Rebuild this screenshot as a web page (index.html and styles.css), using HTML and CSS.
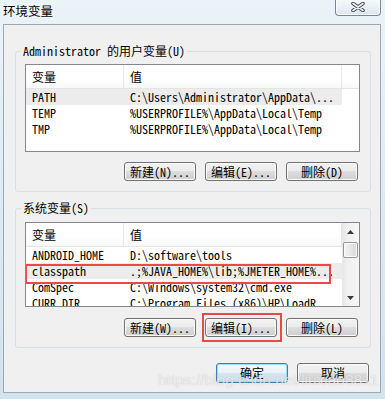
FILE: index.html
```html
<!DOCTYPE html>
<html lang="zh-CN">
<head>
  <meta charset="UTF-8">
  <title>环境变量</title>
  <link rel="stylesheet" href="styles.css">
</head>
<body>

  <!-- title bar -->
  <div class="titlebar">
    <span class="title">环境变量</span>
    <div class="close">
      <svg width="14" height="10" viewBox="0 0 14 10">
        <path d="M2 1.5 L12 8.5 M12 1.5 L2 8.5" stroke="#4a4f55" stroke-width="3.6" stroke-linecap="round"/>
        <path d="M2 1.5 L12 8.5 M12 1.5 L2 8.5" stroke="#eef0f2" stroke-width="1.6" stroke-linecap="round"/>
      </svg>
    </div>
  </div>

  <div class="dialog">

    <!-- user variables -->
    <fieldset class="group">
      <legend>Administrator 的用户变量(U)</legend>
      <div class="list">
        <div class="list-main">
          <div class="head">
            <span class="hcell">变量</span>
            <span class="hcell">值</span>
            <span class="hcell last"></span>
          </div>
          <div class="row sel"><span>PATH</span><span>C:\Users\Administrator\AppData\...</span></div>
          <div class="row"><span>TEMP</span><span>%USERPROFILE%\AppData\Local\Temp</span></div>
          <div class="row"><span>TMP</span><span>%USERPROFILE%\AppData\Local\Temp</span></div>
        </div>
      </div>
      <div class="buttons">
        <button>新建(N)...</button>
        <button>编辑(E)...</button>
        <button>删除(D)</button>
      </div>
    </fieldset>

    <!-- system variables -->
    <fieldset class="group second">
      <legend>系统变量(S)</legend>
      <div class="list short">
        <div class="list-main">
          <div class="head">
            <span class="hcell">变量</span>
            <span class="hcell">值</span>
          </div>
          <div class="row"><span>ANDROID_HOME</span><span>D:\software\tools</span></div>
          <div class="row sel marked"><span>classpath</span><span>.;%JAVA_HOME%\lib;%JMETER_HOME%...</span></div>
          <div class="row"><span>ComSpec</span><span>C:\Windows\system32\cmd.exe</span></div>
          <div class="row"><span>CURR_DIR</span><span>C:\Program Files (x86)\HP\LoadR</span></div>
        </div>
        <div class="scrollbar">
          <div class="sb-btn">
            <svg width="7" height="4" viewBox="0 0 7 4"><path d="M0 4 L3.5 0 L7 4 Z" fill="#3a3a3a"/></svg>
          </div>
          <div class="sb-thumb"></div>
          <div class="sb-track"></div>
          <div class="sb-btn">
            <svg width="7" height="4" viewBox="0 0 7 4"><path d="M0 0 L7 0 L3.5 4 Z" fill="#3a3a3a"/></svg>
          </div>
        </div>
      </div>
      <div class="buttons">
        <button>新建(W)...</button>
        <button class="marked-btn">编辑(I)...</button>
        <button>删除(L)</button>
      </div>
    </fieldset>

    <div class="footer">
      <button class="default">确定</button>
      <button>取消</button>
    </div>
  </div>

  <div class="watermark">https://blog.csdn.net/liuxiao8811</div>

</body>
</html>
```

FILE: styles.css
```css
* {
  box-sizing: border-box;
}
body {
  margin: 0;
  width: 385px;
  height: 399px;
  overflow: hidden;
  position: relative;
  background: linear-gradient(180deg, #eaf3f8 0%, #dde9f2 55%, #d2e3ee 100%);
  font-family: "Noto Sans Mono CJK SC", "Noto Sans CJK SC", monospace;
  font-size: 12px;
  color: #000;
}

/* title bar */
.titlebar {
  height: 24px;
  display: flex;
  align-items: flex-start;
}
.title {
  font-family: "Noto Sans CJK SC", sans-serif;
  font-size: 12.5px;
  line-height: 14px;
  padding: 4px 0 0 3px;
  text-shadow: 0 0 6px #fff;
}
.close {
  margin-left: auto;
  margin-right: 4px;
  margin-top: -1px;
  width: 46px;
  height: 17px;
  border: 1px solid #76879a;
  border-top: none;
  border-radius: 0 0 4px 4px;
  background: linear-gradient(#f7fafc, #dde6ee);
  box-shadow: inset 0 0 0 1px rgba(255, 255, 255, 0.8);
  display: flex;
  align-items: center;
  justify-content: center;
}

/* dialog body */
.dialog {
  margin-left: 3px;
  width: 378px;
  height: 369px;
  border: 1px solid #9ca8b3;
  background: #f0f0f0;
  padding: 19px 9px 0 11px;
}
.group {
  margin: 0;
  min-width: 0;
  padding: 6px 10px 10px 9px;
  border: 1px solid #d5dfe5;
  border-radius: 3px;
}
.group legend {
  padding: 0 2px;
  margin-left: -4px;
  line-height: 14px;
}
.group.second {
  margin-top: 9px;
  padding-top: 7px;
}

/* list view */
.list {
  display: flex;
  height: 88px;
  border: 1px solid #828790;
  background: #fff;
}
.list.short {
  height: 85px;
}
.list-main {
  flex: 1;
  overflow: hidden;
  position: relative;
}
.head {
  display: grid;
  grid-template-columns: 98px 218px 1fr;
  height: 24px;
  border-bottom: 1px solid #e5e5e5;
  background: linear-gradient(#fff, #fff 55%, #f7f8f9);
}
.hcell {
  font-family: "Noto Sans CJK SC", sans-serif;
  line-height: 23px;
  padding-left: 6px;
  border-right: 1px solid #e3e8ee;
}
.hcell.last {
  border-right: none;
}
.row {
  display: grid;
  grid-template-columns: 98px 218px;
  width: 316px;
  height: 16px;
  line-height: 16px;
  white-space: nowrap;
}
.row span {
  overflow: hidden;
  padding-left: 6px;
}
.row.sel {
  background: #ececec;
}
.row.marked {
  position: relative;
}
.row.marked::after {
  content: '';
  position: absolute;
  left: -1px;
  top: 1px;
  width: 302px;
  height: 16px;
  border: 2px solid #e84a4a;
}

/* scrollbar */
.scrollbar {
  width: 17px;
  display: flex;
  flex-direction: column;
  background: linear-gradient(90deg, #e6e6e6, #f1f1f1 35%, #f6f6f6);
}
.sb-btn {
  height: 17px;
  display: flex;
  align-items: center;
  justify-content: center;
}
.sb-thumb {
  margin: 2px 1px 0;
  height: 16px;
  border: 1px solid #979797;
  border-radius: 2px;
  background: linear-gradient(90deg, #f4f4f4, #e6e6e6 50%, #d7d7d7);
  box-shadow: inset 0 0 0 1px #fbfbfb;
}
.sb-track {
  flex: 1;
}

/* buttons */
.buttons {
  display: flex;
  justify-content: flex-end;
  gap: 9px;
  margin-top: 10px;
  padding-right: 2px;
}
.group.second .buttons {
  margin-top: 11px;
}
button {
  width: 72px;
  height: 19px;
  padding: 0;
  border: 1px solid #707070;
  border-radius: 3px;
  background: linear-gradient(#f2f2f2, #ebebeb 50%, #dddddd 50%, #cfcfcf);
  box-shadow: inset 0 0 0 1px #fcfcfc;
  font: inherit;
  line-height: 17px;
  color: #000;
}
.marked-btn {
  position: relative;
}
.marked-btn::after {
  content: '';
  position: absolute;
  inset: -6px -6px -6px -4px;
  border: 2px solid #e84a4a;
}
.footer {
  display: flex;
  justify-content: flex-end;
  gap: 9px;
  margin-top: 15px;
  padding-right: 2px;
}
.footer button {
  height: 20px;
  line-height: 18px;
}
button.default {
  border-color: #3c7fb1;
  box-shadow: inset 0 0 0 1px #9fdcf8;
  background: linear-gradient(#f3f8fb, #eaf2f7 50%, #d9e6ef 50%, #cddde8);
}

.watermark {
  position: absolute;
  left: 158px;
  top: 371px;
  font-family: "Liberation Sans", Arial, sans-serif;
  font-size: 15.5px;
  line-height: 18px;
  color: rgba(255, 255, 255, 0.7);
  text-shadow: 0 0 1px rgba(120, 120, 120, 0.45);
  white-space: nowrap;
}
```
